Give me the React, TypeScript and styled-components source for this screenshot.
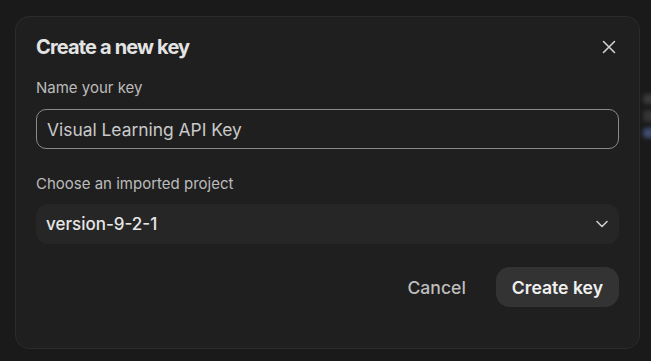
import React from "react"
import styled, {createGlobalStyle} from "styled-components"

const GlobalStyle = createGlobalStyle`
    html, body {
        margin: 0;
        padding: 0;
        background: #1a1a1a;
        font-family: Inter, "Noto Sans", sans-serif;
        -webkit-font-smoothing: antialiased;
    }
    * { box-sizing: border-box; }
`

const Page = styled.div`
    width: 651px;
    height: 361px;
    overflow: hidden;
    display: flex;
    padding: 16px 0 0 15px;
    background: #1a1a1a;
`

const Dialog = styled.div`
    flex: 0 0 625px;
    height: 333px;
    display: flex;
    flex-direction: column;
    padding: 16px 20px 0;
    background: #1f1f1f;
    border: 1px solid #2b2b2b;
    border-radius: 14px;
`

const Behind = styled.div`
    flex: 1;
    display: flex;
    flex-direction: column;
    gap: 6px;
    padding-top: 78px;
    filter: blur(2px);
`

const Blob = styled.div<{tone: string; h: number}>(({tone, h}) => `
    height: ${h}px;
    margin-left: 3px;
    width: 20px;
    border-radius: 4px;
    background: ${tone};
`)

const Header = styled.div`
    display: flex;
    align-items: center;
    justify-content: space-between;
    height: 27px;
`

const Title = styled.h2`
    margin: 0;
    font-size: 20px;
    font-weight: 700;
    letter-spacing: -0.85px;
    color: #e4e4e4;
`

const CloseButton = styled.button`
    display: flex;
    align-items: center;
    justify-content: center;
    width: 20px;
    height: 20px;
    padding: 0;
    border: none;
    background: none;
    color: #d0d0d0;
`

const Label = styled.label<{top: number}>(({top}) => `
    display: block;
    margin-top: ${top}px;
    font-size: 15px;
    line-height: 20px;
    color: #bcbcbc;
`)

const Input = styled.input`
    display: block;
    width: 100%;
    height: 40px;
    margin-top: 11px;
    padding: 0 10px;
    border: 1px solid #8a8a8a;
    border-radius: 10px;
    background: transparent;
    font-family: inherit;
    font-size: 17.4px;
    color: #c9c9c9;
    outline: none;
`

const Select = styled.div`
    display: flex;
    align-items: center;
    justify-content: space-between;
    height: 40px;
    margin-top: 10px;
    padding: 0 10px;
    border-radius: 12px;
    background: #262626;
    font-size: 17px;
    font-weight: 500;
    color: #e6e6e6;
`

const Footer = styled.div`
    display: flex;
    justify-content: flex-end;
    align-items: center;
    gap: 14px;
    margin-top: 23px;
`

const Button = styled.button<{primary?: boolean}>(({primary}) => `
    height: 40px;
    padding: 0 16px;
    border: none;
    border-radius: 14px;
    font-family: inherit;
    font-size: 17.6px;
    font-weight: ${primary ? 600 : 500};
    color: ${primary ? "#f0f0f0" : "#bdbdbd"};
    background: ${primary ? "#333333" : "transparent"};
`)

const App: React.FC = () => (
    <Page>
        <GlobalStyle />
        <Dialog>
            <Header>
                <Title>Create a new key</Title>
                <CloseButton aria-label="Close">
                    <svg width="14" height="14" viewBox="0 0 14 14" fill="none" stroke="currentColor" strokeWidth="1.6" strokeLinecap="round">
                        <path d="M1.5 1.5l11 11M12.5 1.5l-11 11" />
                    </svg>
                </CloseButton>
            </Header>
            <Label top={18}>Name your key</Label>
            <Input defaultValue="Visual Learning API Key" />
            <Label top={25}>Choose an imported project</Label>
            <Select>
                <span>version-9-2-1</span>
                <svg width="14" height="14" viewBox="0 0 14 14" fill="none" stroke="#cfcfcf" strokeWidth="1.6" strokeLinecap="round" strokeLinejoin="round">
                    <path d="M2 4.5l5 5 5-5" />
                </svg>
            </Select>
            <Footer>
                <Button>Cancel</Button>
                <Button primary>Create key</Button>
            </Footer>
        </Dialog>
        <Behind>
            <Blob tone="#3a3a3a" h={10} />
            <Blob tone="#353535" h={12} />
            <Blob tone="#3f4d72" h={10} />
        </Behind>
    </Page>
)

export default App
